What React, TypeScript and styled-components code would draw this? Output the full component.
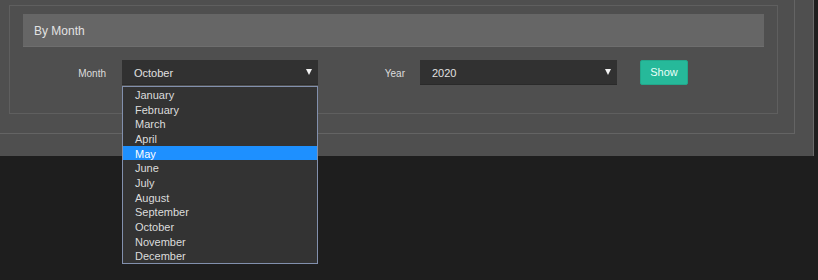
import React from "react";
import styled, { createGlobalStyle } from "styled-components";

const Global = createGlobalStyle`
  html, body { margin: 0; padding: 0; background: #1e1e1e; height: 100%; }
  body { font-family: "Liberation Sans", Arial, sans-serif; }
  #root { min-height: 100vh; }
`;

const Page = styled.div`
  min-height: 280px;
  background: #1e1e1e;
`;

const Panel = styled.div`
  width: 813px;
  height: 156px;
  background: #4f4f4f;
  border-right: 1px solid #6a6a6a;
  box-sizing: content-box;
`;

const OuterBox = styled.div`
  width: 795px;
  height: 134px;
  border-right: 1px solid #646464;
  border-bottom: 1px solid #646464;
  padding: 5px 17px 0 9px;
  box-sizing: border-box;
`;

const InnerBox = styled.div`
  width: 769px;
  height: 109px;
  border: 1px solid #5f5f5f;
  padding: 8px 13px 0 13px;
  box-sizing: border-box;
`;

const Header = styled.div`
  height: 33px;
  background: #666666;
  border-bottom: 1px solid #6e6e6e;
  box-sizing: border-box;
  display: flex;
  align-items: center;
  padding: 2px 0 0 11px;
  color: #e2e2e2;
  font-size: 12px;
`;

const Row = styled.div`
  display: flex;
  align-items: center;
  margin-top: 13px;
  height: 25px;
`;

const Label = styled.div<{ $w: number; $gap: number }>`
  width: ${(p) => p.$w}px;
  margin-right: ${(p) => p.$gap}px;
  padding-top: 2px;
  text-align: right;
  color: #dddddd;
  font-size: 10px;
`;

const SelectWrap = styled.div<{ $w: number }>`
  position: relative;
  width: ${(p) => p.$w}px;
  height: 25px;
`;

const SelectBox = styled.div`
  height: 25px;
  background: #313131;
  border-bottom: 1px solid #2a2a2a;
  box-sizing: border-box;
  display: flex;
  align-items: center;
  justify-content: space-between;
  padding: 2px 6px 0 12px;
  color: #e0e0e0;
  font-size: 11px;
`;

const Arrow = styled.span`
  width: 0;
  height: 0;
  border-left: 3px solid transparent;
  border-right: 3px solid transparent;
  border-top: 6px solid #f2f2f2;
  margin-top: -3px;
`;

const List = styled.ul`
  position: absolute;
  left: 0;
  top: 26px;
  width: 100%;
  margin: 0;
  padding: 0;
  list-style: none;
  background: #333333;
  border: 1px solid #8290ad;
  box-sizing: border-box;
  z-index: 5;
`;

const Item = styled.li<{ $active?: boolean }>`
  height: 14.67px;
  line-height: 16.4px;
  padding-left: 12px;
  font-size: 11px;
  color: ${(p) => (p.$active ? "#ffffff" : "#dcdcdc")};
  background: ${(p) => (p.$active ? "#1e90ff" : "transparent")};
`;

const Button = styled.button`
  margin-left: 23px;
  width: 48px;
  height: 25px;
  background: #26b99a;
  border: 1px solid #22a88b;
  border-radius: 2px;
  color: #eafff9;
  font-family: "Liberation Sans", Arial, sans-serif;
  font-size: 11px;
  padding: 0 0 2px 0;
`;

const months = [
  "January",
  "February",
  "March",
  "April",
  "May",
  "June",
  "July",
  "August",
  "September",
  "October",
  "November",
  "December",
];

export default function App() {
  return (
    <Page>
      <Global />
      <Panel>
        <OuterBox>
          <InnerBox>
            <Header>By Month</Header>
            <Row>
              <Label $w={83} $gap={16}>Month</Label>
              <SelectWrap $w={196}>
                <SelectBox>
                  October
                  <Arrow />
                </SelectBox>
                <List>
                  {months.map((m) => (
                    <Item key={m} $active={m === "May"}>
                      {m}
                    </Item>
                  ))}
                </List>
              </SelectWrap>
              <Label $w={87} $gap={15}>Year</Label>
              <SelectWrap $w={197}>
                <SelectBox>
                  2020
                  <Arrow />
                </SelectBox>
              </SelectWrap>
              <Button>Show</Button>
            </Row>
          </InnerBox>
        </OuterBox>
      </Panel>
    </Page>
  );
}
